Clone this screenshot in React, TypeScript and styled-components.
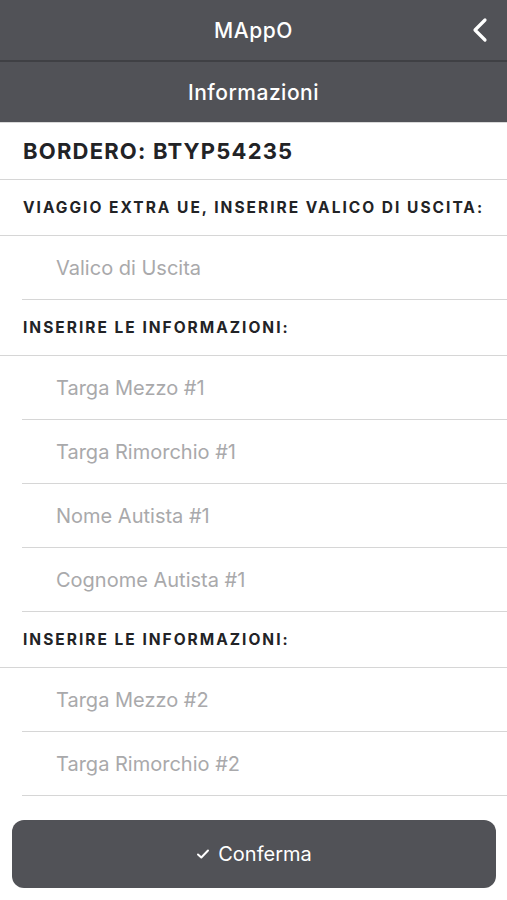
import React from "react"
import styled, { createGlobalStyle } from "styled-components"

const GlobalStyle = createGlobalStyle`
  html, body {
    margin: 0;
    padding: 0;
    background: #ffffff;
    font-family: Inter, "Noto Sans", sans-serif;
  }
  * { box-sizing: border-box; }
`

const sections = [
  {
    title: "VIAGGIO EXTRA UE, INSERIRE VALICO DI USCITA:",
    fields: ["Valico di Uscita"],
  },
  {
    title: "INSERIRE LE INFORMAZIONI:",
    fields: ["Targa Mezzo #1", "Targa Rimorchio #1", "Nome Autista #1", "Cognome Autista #1"],
  },
  {
    title: "INSERIRE LE INFORMAZIONI:",
    fields: ["Targa Mezzo #2", "Targa Rimorchio #2", "Nome Autista #2", "Cognome Autista #2"],
  },
]

export default function App() {
  return (
    <Page>
      <GlobalStyle />
      <NavBar>
        <NavTitle>MAppO</NavTitle>
        <BackBtn aria-label="Indietro">
          <svg width="18" height="26" viewBox="0 0 18 26" fill="none">
            <path d="M14 3 L4 13 L14 23" stroke="#fff" strokeWidth="3.2" strokeLinecap="round" strokeLinejoin="round" />
          </svg>
        </BackBtn>
      </NavBar>
      <SubBar>Informazioni</SubBar>
      <List>
        <TitleRow>BORDERO: BTYP54235</TitleRow>
        {sections.map((s, i) => (
          <React.Fragment key={i}>
            <SectionHeader>{s.title}</SectionHeader>
            {s.fields.map((f) => (
              <FieldRow key={f}>
                <FieldInput placeholder={f} />
              </FieldRow>
            ))}
          </React.Fragment>
        ))}
      </List>
      <Footer>
        <ConfirmBtn>
          <svg width="14" height="12" viewBox="0 0 14 12" fill="none">
            <path d="M2 6.5 L5.3 9.5 L12 2.5" stroke="#fff" strokeWidth="2" strokeLinecap="round" strokeLinejoin="round" />
          </svg>
          Conferma
        </ConfirmBtn>
      </Footer>
    </Page>
  )
}

const Page = styled.div`
  height: 900px;
  display: flex;
  flex-direction: column;
  overflow: hidden;
`

const NavBar = styled.div`
  height: 62px;
  flex: none;
  background: #515257;
  display: flex;
  align-items: center;
  justify-content: center;
  position: relative;
  border-bottom: 2px solid #3f4044;
`

const NavTitle = styled.div`
  color: #ffffff;
  font-size: 21px;
  font-weight: 500;
  letter-spacing: 0.6px;
`

const BackBtn = styled.button`
  position: absolute;
  right: 18px;
  top: 17px;
  background: none;
  border: none;
  padding: 0;
  display: flex;
`

const SubBar = styled.div`
  height: 61px;
  flex: none;
  background: #515257;
  color: #ffffff;
  font-size: 21px;
  font-weight: 500;
  letter-spacing: 0.5px;
  display: flex;
  align-items: center;
  justify-content: center;
  border-bottom: 1px solid #d9d9d9;
`

const List = styled.div`
  flex: 1;
  overflow: hidden;
  display: flex;
  flex-direction: column;
`

const TitleRow = styled.div`
  height: 57px;
  flex: none;
  display: flex;
  align-items: center;
  padding: 0 23px;
  font-size: 22px;
  font-weight: 700;
  letter-spacing: 1.2px;
  color: #222326;
  border-bottom: 1px solid #d6d6d6;
`

const SectionHeader = styled.div`
  height: 56px;
  flex: none;
  display: flex;
  align-items: center;
  padding: 0 0 0 23px;
  white-space: nowrap;
  font-size: 15.5px;
  font-weight: 700;
  letter-spacing: 2px;
  color: #222326;
  border-bottom: 1px solid #d6d6d6;
`

const FieldRow = styled.div`
  height: 64px;
  flex: none;
  padding-left: 22px;
  display: flex;
`

const FieldInput = styled.input`
  flex: 1;
  border: none;
  border-bottom: 1px solid #d6d6d6;
  outline: none;
  background: transparent;
  padding: 0 0 0 34px;
  font-family: Inter, "Noto Sans", sans-serif;
  font-size: 20px;
  color: #222;
  &::placeholder {
    color: #a9a9ab;
  }
`

const Footer = styled.div`
  flex: none;
  padding: 24px 11px 12px 12px;
  background: #ffffff;
`

const ConfirmBtn = styled.button`
  width: 100%;
  height: 68px;
  border: none;
  border-radius: 12px;
  background: #515257;
  color: #ffffff;
  font-family: Inter, "Noto Sans", sans-serif;
  font-size: 20px;
  display: flex;
  align-items: center;
  justify-content: center;
  gap: 8px;
`
